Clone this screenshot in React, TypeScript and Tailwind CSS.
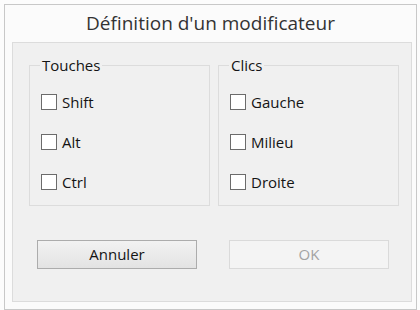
import React, { useState } from 'react';

const FONT = "font-['Segoe_UI','Open_Sans','Noto_Sans',sans-serif]";

type BoxProps = { label: string; checked: boolean; onToggle: () => void };

const Check: React.FC<BoxProps> = ({ label, checked, onToggle }) => (
  <label className="flex items-center h-[16px] cursor-default select-none" onClick={onToggle}>
    <span className="w-[16px] h-[16px] border border-[#6b6b6b] bg-white flex items-center justify-center">
      {checked && (
        <svg width="11" height="11" viewBox="0 0 10 10">
          <path d="M1.5 5l2.5 2.5 4.5-5" fill="none" stroke="#222" strokeWidth="1.5" />
        </svg>
      )}
    </span>
    <span className="ml-[5px] text-[15px] leading-[16px] text-[#141414]">{label}</span>
  </label>
);

const Group: React.FC<{ title: string; items: string[] }> = ({ title, items }) => {
  const [state, setState] = useState<Record<string, boolean>>({});
  return (
    <div className="relative w-[181px] h-[141px] border border-[#dcdcdc]">
      <span className="absolute left-[10px] -top-[11px] px-[2px] bg-[#f0f0f0] text-[15px] leading-[20px] text-[#141414]">
        {title}
      </span>
      <div className="flex flex-col gap-[24px] pl-[11px] pt-[28px]">
        {items.map((it) => (
          <Check
            key={it}
            label={it}
            checked={!!state[it]}
            onToggle={() => setState((s) => ({ ...s, [it]: !s[it] }))}
          />
        ))}
      </div>
    </div>
  );
};

export default function App() {
  return (
    <div className={`w-[420px] h-[310px] bg-[#fcfcfc] pt-[4px] pl-[4px] ${FONT}`}>
      <div className="w-[413px] h-[306px] border border-[#c8c8c8] bg-[#fbfbfb] flex flex-col">
        <div className="h-[37px] flex items-center justify-center text-[19px] text-[#333]">
          Définition d'un modificateur
        </div>
        <div className="ml-[7px] w-[400px] h-[260px] border border-[#dcdcdc] bg-[#f0f0f0] flex flex-col">
          <div className="flex gap-[8px] pl-[16px] pt-[22px]">
            <Group title="Touches" items={['Shift', 'Alt', 'Ctrl']} />
            <Group title="Clics" items={['Gauche', 'Milieu', 'Droite']} />
          </div>
          <div className="flex gap-[32px] pl-[24px] pt-[34px]">
            <button className="w-[160px] h-[29px] border border-[#acacac] bg-gradient-to-b from-[#f2f2f2] to-[#e3e3e3] text-[15px] text-[#141414]">
              Annuler
            </button>
            <button disabled className="w-[160px] h-[29px] border border-[#dadada] bg-[#f4f4f4] text-[15px] text-[#a3a3a3]">
              OK
            </button>
          </div>
        </div>
      </div>
    </div>
  );
}
